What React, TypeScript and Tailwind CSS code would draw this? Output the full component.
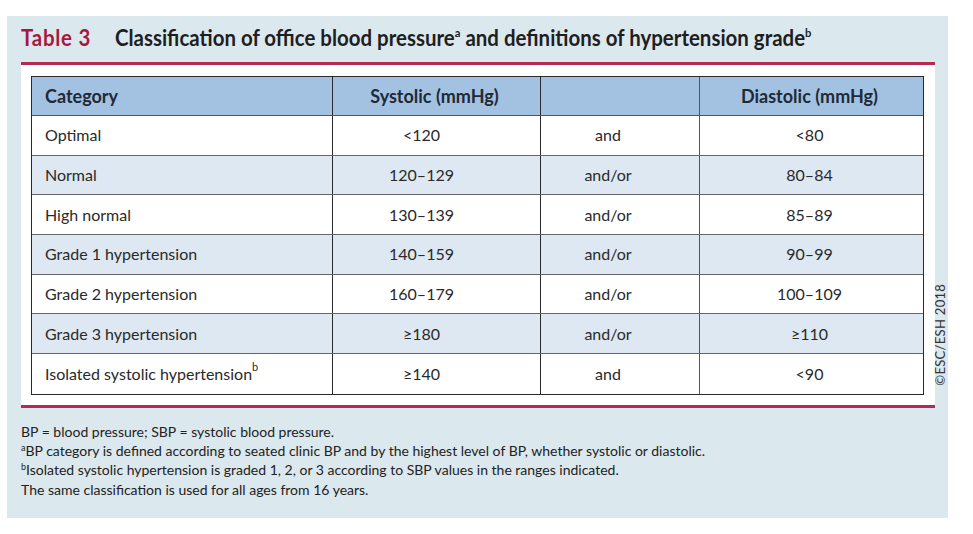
import React from "react";

const rows: { cat: React.ReactNode; sys: string; op: string; dia: string }[] = [
  { cat: "Optimal", sys: "<120", op: "and", dia: "<80" },
  { cat: "Normal", sys: "120–129", op: "and/or", dia: "80–84" },
  { cat: "High normal", sys: "130–139", op: "and/or", dia: "85–89" },
  { cat: "Grade 1 hypertension", sys: "140–159", op: "and/or", dia: "90–99" },
  { cat: "Grade 2 hypertension", sys: "160–179", op: "and/or", dia: "100–109" },
  { cat: "Grade 3 hypertension", sys: "≥180", op: "and/or", dia: "≥110" },
  {
    cat: (
      <>
        Isolated systolic hypertension
        <sup className="text-[11px] relative -top-[7px]">b</sup>
      </>
    ),
    sys: "≥140",
    op: "and",
    dia: "<90",
  },
];

export default function App() {
  const font = { fontFamily: "Lato, 'Open Sans', sans-serif" };
  return (
    <div className="w-[973px] h-[534px] bg-white pt-[16px] pl-[7px]" style={font}>
      <div className="relative w-[941px] h-[502px] bg-[#dbe8ee] pl-[14px] pr-[13px]">
        {/* Title */}
        <div className="h-[46px] flex items-center pb-[3px] text-[22px] font-bold leading-none">
          <div className="flex items-baseline origin-left scale-x-[0.93] whitespace-nowrap">
            <span className="text-[#a6183f] w-[101px] tracking-[0.8px]">Table 3</span>
            <span className="text-[#1e1e1e]">
              Classification of office blood pressure
              <sup className="text-[12px] relative -top-[9px]">a</sup> and definitions of hypertension grade
              <sup className="text-[12px] relative -top-[9px]">b</sup>
            </span>
          </div>
        </div>
        <div className="h-[3px] bg-[#b52a52]" />
        {/* White box */}
        <div className="bg-white pl-[10px] pr-[11px] pt-[11px] pb-[10px]">
          <div className="border-[1.5px] border-[#2a2a2a] text-[16px] text-[#2a2a2a]">
            <div className="grid grid-cols-[301px_208px_159px_1fr] h-[39px] bg-[#a3c2e2] font-bold text-[18px] text-[#1f2a36] border-b border-[#555]">
              <div className="flex items-center pl-[13px] border-r-[1.5px] border-[#2a2a2a]">Category</div>
              <div className="flex items-center justify-center pr-[4px] border-r-[1.5px] border-[#2a2a2a]">Systolic (mmHg)</div>
              <div className="border-r border-[#555]" />
              <div className="flex items-center justify-center pr-[4px]">Diastolic (mmHg)</div>
            </div>
            {rows.map((r, i) => (
              <div
                key={i}
                className={
                  "grid grid-cols-[301px_208px_159px_1fr] h-[39.7px] " +
                  (i % 2 === 1 ? "bg-[#dde8f2] " : "bg-white ") +
                  (i < rows.length - 1 ? "border-b border-[#666]" : "")
                }
              >
                <div className="flex items-center pl-[13px] border-r-[1.5px] border-[#2a2a2a]">{r.cat}</div>
                <div className="flex items-center justify-center pr-[30px] border-r-[1.5px] border-[#2a2a2a]">{r.sys}</div>
                <div className="flex items-center justify-center pr-[24px] border-r border-[#555]">{r.op}</div>
                <div className="flex items-center justify-center pr-[4px]">{r.dia}</div>
              </div>
            ))}
          </div>
        </div>
        <div className="h-[3px] bg-[#b52a52]" />
        {/* Footnotes */}
        <div className="pt-[14px] text-[14px] leading-[19.3px] text-[#222]">
          <div>BP = blood pressure; SBP = systolic blood pressure.</div>
          <div>
            <sup className="text-[9px] relative -top-[5px]">a</sup>BP category is defined according to seated clinic BP and by the highest level of BP, whether systolic or diastolic.
          </div>
          <div>
            <sup className="text-[9px] relative -top-[5px]">b</sup>Isolated systolic hypertension is graded 1, 2, or 3 according to SBP values in the ranges indicated.
          </div>
          <div>The same classification is used for all ages from 16 years.</div>
        </div>
        {/* Copyright */}
        <div className="absolute left-[926px] top-[259px] h-[120px] w-[16px] flex items-center justify-center">
          <span className="-rotate-90 whitespace-nowrap text-[13px] text-[#333] tracking-[0.3px]">©ESC/ESH 2018</span>
        </div>
      </div>
    </div>
  );
}
